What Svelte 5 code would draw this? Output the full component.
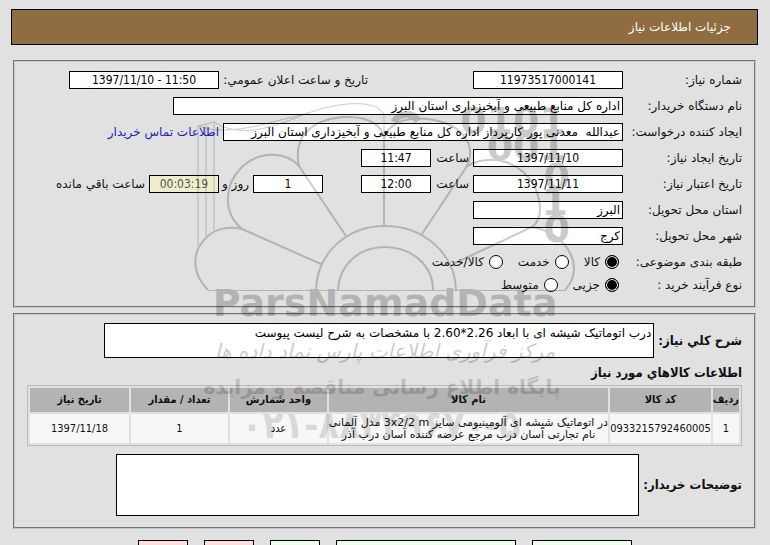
<script>
  const goods = [
    {
      code: '0933215792460005',
      name: ['در اتوماتیک شیشه ای آلومینیومی سایز 3x2/2 m مدل آلمانی', 'نام تجارتی آسان درب مرجع عرضه کننده آسان درب آذر'],
      unit: 'عدد',
      count: 1,
      date: '1397/11/18'
    }
  ];

  let subject = 'kala';
  let process = 'small';
</script>

<main dir="rtl">
  <header>جزئیات اطلاعات نیاز</header>

  <fieldset class="info">
    <div class="row">
      <label class="name" for="number">شماره نیاز:</label>
      <input id="number" value="11973517000141" readonly />
      <label class="announce" for="announce">تاریخ و ساعت اعلان عمومي:</label>
      <input id="announce" dir="ltr" value="1397/11/10 - 11:50" readonly />
    </div>
    <div class="row">
      <label class="name" for="buyer">نام دستگاه خریدار:</label>
      <input class="text widest" id="buyer" value="اداره کل منابع طبیعی و آبخیزداری استان البرز" readonly />
    </div>
    <div class="row">
      <label class="name" for="creator">ایجاد کننده درخواست:</label>
      <input class="text wide" id="creator" value="عبدالله  معدنی پور کارپرداز اداره کل منابع طبیعی و آبخیزداری استان البرز" readonly />
      <a class="after" href="#contact">اطلاعات تماس خریدار</a>
    </div>
    <div class="row">
      <label class="name" for="created">تاریخ ایجاد نیاز:</label>
      <input id="created" value="1397/11/10" readonly />
      <label class="hour" for="created-hour">ساعت</label>
      <input class="short" id="created-hour" value="11:47" readonly />
    </div>
    <div class="row">
      <label class="name" for="valid">تاریخ اعتبار نیاز:</label>
      <input id="valid" value="1397/11/11" readonly />
      <label class="hour" for="valid-hour">ساعت</label>
      <input class="short" id="valid-hour" value="12:00" readonly />
      <input class="short days" id="days" value="1" readonly />
      <label class="and" for="days">روز و</label>
      <input class="short left" id="left" value="00:03:19" readonly />
      <label class="after" for="left">ساعت باقي مانده</label>
    </div>
    <div class="row">
      <label class="name" for="province">استان محل تحویل:</label>
      <input class="text" id="province" value="البرز" readonly />
    </div>
    <div class="row">
      <label class="name" for="city">شهر محل تحویل:</label>
      <input class="text" id="city" value="کرج" readonly />
    </div>
    <div class="row radios">
      <span class="name">طبقه بندی موضوعی:</span>
      <label><input type="radio" bind:group={subject} value="kala" />کالا</label>
      <label><input type="radio" bind:group={subject} value="service" />خدمت</label>
      <label><input type="radio" bind:group={subject} value="both" />کالا/خدمت</label>
    </div>
    <div class="row radios">
      <span class="name">نوع فرآیند خرید :</span>
      <label><input type="radio" bind:group={process} value="small" />جزیی</label>
      <label><input type="radio" bind:group={process} value="medium" />متوسط</label>
    </div>
  </fieldset>

  <fieldset class="goods">
    <div class="area">
      <label for="summary">شرح کلي نیاز:</label>
      <textarea class="summary" id="summary" readonly>درب اتوماتیک شیشه ای با ابعاد 2.26*2.60 با مشخصات به شرح لیست پیوست</textarea>
    </div>

    <h2>اطلاعات کالاهاي مورد نیاز</h2>
    <table>
      <colgroup>
        <col class="c-row" /><col class="c-code" /><col /><col class="c-unit" /><col class="c-count" /><col class="c-date" />
      </colgroup>
      <thead>
        <tr>
          <th>ردیف</th>
          <th>کد کالا</th>
          <th>نام کالا</th>
          <th>واحد شمارش</th>
          <th>تعداد / مقدار</th>
          <th>تاریخ نیاز</th>
        </tr>
      </thead>
      <tbody>
        {#each goods as item, i}
        <tr>
          <td>{i + 1}</td>
          <td>{item.code}</td>
          <td class="item">{item.name[0]}<br />{item.name[1]}</td>
          <td>{item.unit}</td>
          <td>{item.count}</td>
          <td>{item.date}</td>
        </tr>
        {/each}
      </tbody>
    </table>

    <div class="area">
      <label for="comments">توضیحات خریدار:</label>
      <textarea class="comments" id="comments" readonly></textarea>
    </div>
  </fieldset>

  <div class="actions">
    <button class="green medium" aria-label="پاسخ"></button>
    <button class="green large" aria-label="اسناد"></button>
    <button class="green" aria-label="چاپ"></button>
    <button class="red" aria-label="بازگشت"></button>
    <button class="red" aria-label="خروج"></button>
  </div>

  <svg class="watermark" viewBox="0 0 390 360" direction="ltr" aria-hidden="true">
    <g fill="none" stroke="#000" stroke-width="2">
      <path d="M18 200.500H375" stroke-width="1" />
      <path d="M126 200C127 163 157 136 195 136S265 163 266 200M148 200C149 175 169 157 195 157S243 175 243 200" />
      <path d="M18 200C2 184 1 162 16 148C25 138 40 136 52 139L131 174" />
      <path d="M52 139C32 122 35 95 50 79C68 60 96 61 109 76L156 146" />
      <path d="M109 76C103 48 120 29 155 27C180 26 193 36 194 50V135" />
      <path d="M194 50C197 33 215 27 238 29C272 33 287 55 277 76L232 144" />
      <path d="M277 76C304 62 332 73 345 97C353 117 351 130 342 137L265 173" />
      <path d="M342 137C369 141 385 163 384 180C383 190 378 197 375 200" />
      <path d="M8 156V36L24 32V140M16 146V34M24 32C48 47 76 40 108 27C140 13 184 7 194 24V50M8 36L24 40C60 42 90 28 118 24" stroke-width="1" />
      <path d="M204 32C209 22 223 22 228 31" stroke-width="7" />
    </g>
    <g class="digits">
      <text x="376" y="44" text-anchor="end">0101</text>
      <text x="376" y="70" text-anchor="end">001</text>
      <text x="380" y="100" text-anchor="end">0</text>
      <text x="378" y="125" text-anchor="end">1</text>
      <text x="380" y="152" text-anchor="end">0</text>
    </g>
    <text class="brand" x="195" y="226" text-anchor="middle">ParsNamadData</text>
    <text class="motto" x="195" y="268" text-anchor="middle">مرکز فرآوری اطلاعات پارس نماد داده ها</text>
    <text class="site" x="192" y="304" text-anchor="middle">پایگاه اطلاع رسانی مناقصه و مزایده</text>
    <text class="phone" x="191" y="348" text-anchor="middle">۰۲۱-۸۸۳۴۹۶۷۰-۵</text>
  </svg>
</main>

<style>
  :global(body) {
    background: #e1e1e1;
  }

  main {
    position: relative;
    padding: 9px 12px 0 11px;
    font: 12px/18px "DejaVu Sans", sans-serif;
    color: #111;
    overflow: hidden;
  }

  header {
    padding: 8px 26px;
    border: 1px solid #000;
    background: #8f6d40;
    color: #fff;
  }

  fieldset {
    min-width: 0;
    margin: 0 2px;
    border: 2px groove #c8c8c8;
  }

  .info {
    margin-top: 15px;
    padding: 9px 12px 7px;
  }

  .row {
    display: flex;
    align-items: center;
    height: 18px;
    margin-bottom: 8px;
    white-space: nowrap;
  }

  .name {
    flex: 0 0 119px;
  }

  input, textarea {
    box-sizing: border-box;
    margin: 0;
    padding: 0 2px;
    border: 1px solid #000;
    border-radius: 0;
    background: #fff;
    color: #000;
    font: inherit;
  }

  .row input {
    width: 150px;
    height: 18px;
    font-family: "DejaVu Sans Condensed", "DejaVu Sans", sans-serif;
    text-align: center;
    line-height: 16px;
  }

  .row .text {
    font-family: "DejaVu Sans", sans-serif;
    text-align: right;
  }

  .row .widest { width: 450px; }

  .row .wide { width: 400px; }

  .row .short { width: 70px; }

  .row .days { margin-right: 38px; }

  .row .left {
    background: #eeeecc;
    color: #555;
  }

  .announce {
    width: 149px;
    margin-right: 105px;
  }

  .hour {
    width: 38px;
    padding-right: 4px;
  }

  .and {
    width: 30px;
    padding-right: 4px;
  }

  .after { padding-right: 4px; }

  a {
    color: #2222bb;
    text-decoration: none;
  }

  .radios { margin-bottom: 5px; }

  .radios label {
    display: flex;
    align-items: center;
    gap: 5px;
    margin: 0 4px 0 11px;
  }

  .row input[type="radio"] {
    appearance: none;
    width: 14px;
    height: 14px;
    padding: 0;
    border-radius: 50%;
  }

  .row input[type="radio"]:checked {
    background: #000;
    box-shadow: inset 0 0 0 1px #fff;
  }

  .goods {
    margin-top: 5px;
    padding: 8px 12px 11px;
  }

  .area {
    display: flex;
    align-items: center;
    gap: 4px;
  }

  .area label, h2 {
    font: bold 13px/18px "DejaVu Sans Condensed", "DejaVu Sans", sans-serif;
  }

  textarea {
    resize: none;
    overflow: hidden;
  }

  .summary {
    width: 550px;
    height: 35px;
  }

  .comments {
    width: 523px;
    height: 62px;
  }

  h2 {
    margin: 6px 0 3px;
  }

  table {
    width: 100%;
    margin-bottom: 8px;
    table-layout: fixed;
    border: 1px solid #bbb;
    border-spacing: 2px;
    font: 11px/12px "DejaVu Sans Condensed", "DejaVu Sans", sans-serif;
    text-align: center;
  }

  th {
    height: 24px;
    padding: 0;
    background: #b3b3b3;
    white-space: nowrap;
  }

  td {
    height: 29px;
    padding: 0;
    background: #f7f7f7;
    white-space: nowrap;
  }

  .item { font-family: "DejaVu Sans", sans-serif; }

  .c-row { width: 26px; }

  .c-code { width: 101px; }

  .c-unit, .c-count { width: 97px; }

  .c-date { width: 99px; }

  .actions {
    display: flex;
    gap: 16px;
    margin-top: 11px;
    padding-right: 126px;
  }

  button {
    width: 50px;
    height: 24px;
    padding: 0;
    border: 1px solid #000;
  }

  .medium { width: 100px; }

  .large { width: 180px; }

  .green { background: #eeffee; }

  .red { background: #ffdddd; }

  .watermark {
    position: absolute;
    top: 90px;
    left: 50%;
    width: 390px;
    height: 360px;
    margin-left: -195px;
    opacity: 0.2;
    pointer-events: none;
  }

  .digits, .brand {
    font-size: 38px;
    font-weight: bold;
  }

  .motto {
    font-size: 20px;
    font-style: italic;
  }

  .site {
    font-size: 20px;
    font-weight: bold;
    opacity: 0.8;
  }

  .phone {
    font-family: "DejaVu Sans Condensed", sans-serif;
    font-size: 38px;
    font-weight: bold;
    opacity: 0.6;
  }
</style>
